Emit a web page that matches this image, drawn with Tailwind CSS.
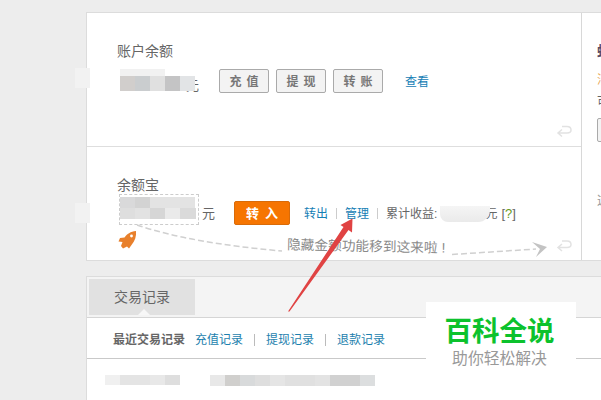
<!DOCTYPE html>
<html lang="zh-CN">
<head>
<meta charset="utf-8">
<title>账户余额</title>
<script src="https://cdn.jsdelivr.net/npm/@tailwindcss/browser@4"></script>
</head>
<body class="relative h-[400px] w-[601px] overflow-hidden bg-[#ededed] font-['Liberation_Sans','Noto_Sans_CJK_SC',sans-serif] text-xs text-[#666] whitespace-nowrap">
<main class="flex flex-col gap-[15px] overflow-hidden pt-3 pl-[86px]">
  <section class="flex h-[249px] w-[515px] border-y border-l border-[#dcdcdc] bg-white">
    <div class="w-[495px] shrink-0 border-r border-[#d8d8d8]">
      <div class="h-[134px] border-b border-[#dedede] pt-[28px] pl-[30px]">
        <h2 class="text-sm leading-5">账户余额</h2>
        <div class="mt-[8px] flex h-6 items-center">
          <div class="relative z-10 ml-[3px] h-[22px] w-[75px] shrink-0 -mt-[2px]">
            <div class="h-[7px] w-[45px] bg-[#f1f1f1]"></div>
            <div class="flex h-[15px]"><i class="w-[15px] bg-[#d1cecc]"></i><i class="w-[15px] bg-[#cacdcf]"></i><i class="w-[15px] bg-[#e0e0e0]"></i><i class="w-[15px] bg-[#c4c4c5]"></i><i class="w-[15px] bg-[#e2e4e6]"></i></div>
          </div>
          <span class="-ml-[9px] mt-[9px] w-[33px] text-[13px]">元</span>
          <div class="flex gap-[7px] text-xs font-bold text-[#777]">
            <button class="flex h-6 w-[50px] items-center justify-center gap-[5px] rounded-[2px] border border-[#aaa] bg-[#f3f3f3] pt-0.5"><span>充</span> <span>值</span></button>
            <button class="flex h-6 w-[50px] items-center justify-center gap-[5px] rounded-[2px] border border-[#aaa] bg-[#f3f3f3] pt-0.5"><span>提</span> <span>现</span></button>
            <button class="flex h-6 w-[50px] items-center justify-center gap-[5px] rounded-[2px] border border-[#aaa] bg-[#f3f3f3] pt-0.5"><span>转</span> <span>账</span></button>
          </div>
          <a class="ml-[22px] mt-0.5 text-[#1680b5]">查看</a>
        </div>
      </div>
      <div class="h-[113px] pt-[28px] pl-[30px]">
        <h2 class="text-sm leading-5">余额宝</h2>
        <div class="-mt-px flex h-[31px] items-center">
          <div class="ml-[2px] flex h-[31px] w-[80px] shrink-0 flex-col border border-dashed border-[#ccc] pt-[2px]">
            <div class="flex h-[11px]"><i class="w-[15px] bg-[#d9d9da]"></i><i class="w-[15px] bg-[#d3d3d3]"></i><i class="w-[45px] bg-[#e3e3e3]"></i></div>
            <div class="flex h-[11px]"><i class="w-[15px] bg-[#dedede]"></i><i class="w-[15px] bg-[#e2e2e2]"></i><i class="w-[15px] bg-[#d6d6d6]"></i><i class="w-[15px] bg-[#eaeaea]"></i><i class="w-[16px] bg-[#dadada]"></i></div>
          </div>
          <span class="mt-[8px] ml-[3px] w-[32px] text-[13px]">元</span>
          <button class="mt-[7px] flex h-6 w-[56px] items-center justify-center gap-1.5 rounded-[2px] border border-[#d96b09] bg-[#f67501] pt-0.5 text-[13px] font-bold text-white"><span>转</span> <span>入</span></button>
          <div class="mt-[9px] ml-[14px] flex items-center">
            <a class="text-[#1680b5]">转出</a>
            <i class="mx-2 h-[11px] w-px bg-[#ccc]"></i>
            <a class="text-[#1680b5]">管理</a>
            <i class="mx-2 h-[11px] w-px bg-[#ccc]"></i>
            <span>累计收益:</span>
            <span class="relative z-10 ml-[3px] h-[16px] w-[50px] rounded-br-xl rounded-bl-lg bg-linear-to-b from-[#f5f5f5] to-[#eaeaea]"></span>
            <span class="-ml-[5px]">元</span>
            <span class="ml-[4px] text-[13px]">[<b class="font-normal text-[#679a20]">?</b>]</span>
          </div>
        </div>
      </div>
    </div>
    <aside class="w-[19px] shrink-0 overflow-hidden pt-[28px] pl-[15px]">
      <h3 class="text-sm leading-5 font-bold text-[#574962]">蚂</h3>
      <p class="mt-[9px] leading-5 text-[#e9a550]">消</p>
      <p class="mt-[2px] leading-5">可</p>
      <button class="mt-[6px] block h-6 w-[50px] rounded-[2px] border border-[#aaa] bg-[#f3f3f3]"></button>
      <p class="mt-[49px] leading-5 text-[#999]">这</p>
    </aside>
  </section>
  <section class="h-[130px] w-[515px] border-y border-l border-[#dcdcdc] bg-white">
    <div class="h-[41px] border-b border-[#d5d5d5] bg-[#f4f4f4] pt-[2px] pl-[2px]">
      <div class="relative flex h-[36px] w-[106px] items-center justify-center bg-[#e1e1e1] text-sm">交易记录
        <svg class="absolute bottom-0 left-[49px] h-[6px] w-3" viewBox="0 0 12 6"><path d="M0 6L6 0L12 6Z" fill="#f7f7f7"/></svg>
      </div>
    </div>
    <nav class="flex h-[41px] items-center border-b border-[#c9c9c9] pb-px pl-[26px] pt-1">
      <b class="mr-[10px] text-[#666]">最近交易记录</b>
      <a class="text-[#1d7fae]">充值记录</a>
      <i class="mx-[11px] h-[12px] w-px bg-[#bbb]"></i>
      <a class="text-[#1d7fae]">提现记录</a>
      <i class="mx-[11px] h-[12px] w-px bg-[#bbb]"></i>
      <a class="text-[#1d7fae]">退款记录</a>
    </nav>
    <div class="flex pt-[16px] pl-[18px]">
      <div class="flex h-[10px]"><i class="w-[15px] bg-[#f0f0f0]"></i><i class="w-[30px] bg-[#e4e4e4]"></i><i class="w-[15px] bg-[#e8e8e8]"></i><i class="w-[15px] bg-[#dedede]"></i></div>
      <div class="ml-[30px] flex h-[11px]"><i class="w-[15px] bg-[#e8e8e8]"></i><i class="w-[15px] bg-[#d0cfcd]"></i><i class="w-[15px] bg-[#d8dadb]"></i><i class="w-[15px] bg-[#dedede]"></i><i class="w-[15px] bg-[#e5e5e5]"></i><i class="w-[30px] bg-[#e0e0e0]"></i><i class="w-[15px] bg-[#e3e3e3]"></i><i class="w-[30px] bg-[#d1d1d1]"></i><i class="w-[15px] bg-[#dcdedf]"></i></div>
    </div>
  </section>
</main>

<div class="absolute top-[68px] left-[75px] h-5 w-[15px] bg-[#f2f2f2]"></div>
<div class="absolute top-[203px] left-[75px] h-5 w-[15px] bg-[#f2f2f2]"></div>
<div class="absolute top-[237px] left-[287px] rotate-[1.2deg] text-[13.7px] leading-5 text-[#8a8a8a]">隐藏金额功能移到这来啦<span class="ml-1">!</span></div>
<svg class="absolute inset-0" width="601" height="400" viewBox="0 0 601 400" fill="none">
  <path d="M137 225Q190 243 282 251M452 254.500L536 249" stroke="#d0d0d0" stroke-width="1.500" stroke-dasharray="6 3"/>
  <path d="M532 242L547 247L536 257L540 249Z" fill="#c3c3c3"/>
  <g stroke="#e2e2e2" stroke-width="1.500">
    <path d="M562 126.500H567Q571 126.500 571 130Q571 133 567 133H558M562 129.500L558 133L562 136.500"/>
    <path d="M562 241H567Q571 241 571 244.500Q571 247.500 567 247.500H558M562 244L558 247.500L562 251"/>
  </g>
  <path d="M136 231C130.500 231.500 127 234 124.500 237.500L120 238L118.500 241.500L122.500 242L121 246L123 248.500L127 246.500L129 248.500L131.500 245C135 241 136.500 236 136 231Z" fill="#e8802c"/>
  <circle cx="131.500" cy="236" r="1.400" fill="#fff"/>
  <path d="M288 311.500L343.500 227L340.500 225L352.500 218.500L352 232.500L348.500 230L289.500 311.500Z" fill="#e04343"/>
</svg>
<div class="absolute top-[302px] left-[426px] flex h-[74px] w-[150px] flex-col items-center bg-white pt-[10px] pr-[3px]">
  <div class="text-[27.500px] leading-[40px] font-bold text-[#0cc22d]">百科全说</div>
  <div class="-mt-[3px] text-[15.800px] leading-5 text-[#999]">助你轻松解决</div>
</div>
</body>
</html>
